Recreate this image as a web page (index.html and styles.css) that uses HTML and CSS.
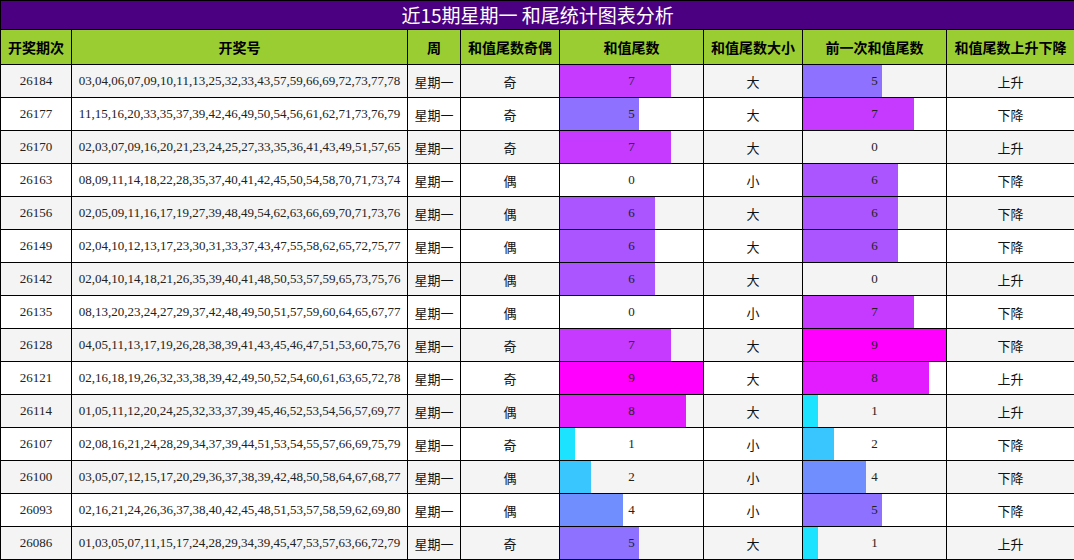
FILE: index.html
```html
<!DOCTYPE html>
<html lang="zh">
<head>
<meta charset="utf-8">
<title>近15期星期一 和尾统计图表分析</title>
<link rel="stylesheet" href="styles.css">
</head>
<body>
<table class="chart">
<colgroup>
<col class="c1"><col class="c2"><col class="c3"><col class="c4"><col class="c5"><col class="c6"><col class="c7"><col class="c8">
</colgroup>
<thead>
<tr class="title-row"><th colspan="8">近15期星期一 和尾统计图表分析</th></tr>
<tr class="head-row">
<th>开奖期次</th><th>开奖号</th><th>周</th><th>和值尾数奇偶</th><th>和值尾数</th><th>和值尾数大小</th><th>前一次和值尾数</th><th>和值尾数上升下降</th>
</tr>
</thead>
<tbody>
<tr><td class="num">26184</td><td class="num">03,04,06,07,09,10,11,13,25,32,33,43,57,59,66,69,72,73,77,78</td><td class="zh">星期一</td><td class="zh">奇</td><td class="bar" style="background-image:linear-gradient(90deg,#c639ff 77.3%,transparent 77.3%)">7</td><td class="zh">大</td><td class="bar" style="background-image:linear-gradient(90deg,#8e71ff 55.2%,transparent 55.2%)">5</td><td class="zh">上升</td></tr>
<tr><td class="num">26177</td><td class="num">11,15,16,20,33,35,37,39,42,46,49,50,54,56,61,62,71,73,76,79</td><td class="zh">星期一</td><td class="zh">奇</td><td class="bar" style="background-image:linear-gradient(90deg,#8e71ff 55.2%,transparent 55.2%)">5</td><td class="zh">大</td><td class="bar" style="background-image:linear-gradient(90deg,#c639ff 77.3%,transparent 77.3%)">7</td><td class="zh">下降</td></tr>
<tr><td class="num">26170</td><td class="num">02,03,07,09,16,20,21,23,24,25,27,33,35,36,41,43,49,51,57,65</td><td class="zh">星期一</td><td class="zh">奇</td><td class="bar" style="background-image:linear-gradient(90deg,#c639ff 77.3%,transparent 77.3%)">7</td><td class="zh">大</td><td class="bar">0</td><td class="zh">上升</td></tr>
<tr><td class="num">26163</td><td class="num">08,09,11,14,18,22,28,35,37,40,41,42,45,50,54,58,70,71,73,74</td><td class="zh">星期一</td><td class="zh">偶</td><td class="bar">0</td><td class="zh">小</td><td class="bar" style="background-image:linear-gradient(90deg,#aa55ff 66.3%,transparent 66.3%)">6</td><td class="zh">下降</td></tr>
<tr><td class="num">26156</td><td class="num">02,05,09,11,16,17,19,27,39,48,49,54,62,63,66,69,70,71,73,76</td><td class="zh">星期一</td><td class="zh">偶</td><td class="bar" style="background-image:linear-gradient(90deg,#aa55ff 66.3%,transparent 66.3%)">6</td><td class="zh">大</td><td class="bar" style="background-image:linear-gradient(90deg,#aa55ff 66.3%,transparent 66.3%)">6</td><td class="zh">下降</td></tr>
<tr><td class="num">26149</td><td class="num">02,04,10,12,13,17,23,30,31,33,37,43,47,55,58,62,65,72,75,77</td><td class="zh">星期一</td><td class="zh">偶</td><td class="bar" style="background-image:linear-gradient(90deg,#aa55ff 66.3%,transparent 66.3%)">6</td><td class="zh">大</td><td class="bar" style="background-image:linear-gradient(90deg,#aa55ff 66.3%,transparent 66.3%)">6</td><td class="zh">下降</td></tr>
<tr><td class="num">26142</td><td class="num">02,04,10,14,18,21,26,35,39,40,41,48,50,53,57,59,65,73,75,76</td><td class="zh">星期一</td><td class="zh">偶</td><td class="bar" style="background-image:linear-gradient(90deg,#aa55ff 66.3%,transparent 66.3%)">6</td><td class="zh">大</td><td class="bar">0</td><td class="zh">上升</td></tr>
<tr><td class="num">26135</td><td class="num">08,13,20,23,24,27,29,37,42,48,49,50,51,57,59,60,64,65,67,77</td><td class="zh">星期一</td><td class="zh">偶</td><td class="bar">0</td><td class="zh">小</td><td class="bar" style="background-image:linear-gradient(90deg,#c639ff 77.3%,transparent 77.3%)">7</td><td class="zh">下降</td></tr>
<tr><td class="num">26128</td><td class="num">04,05,11,13,17,19,26,28,38,39,41,43,45,46,47,51,53,60,75,76</td><td class="zh">星期一</td><td class="zh">奇</td><td class="bar" style="background-image:linear-gradient(90deg,#c639ff 77.3%,transparent 77.3%)">7</td><td class="zh">大</td><td class="bar" style="background-image:linear-gradient(90deg,#ff00ff 100%,transparent 100%)">9</td><td class="zh">下降</td></tr>
<tr><td class="num">26121</td><td class="num">02,16,18,19,26,32,33,38,39,42,49,50,52,54,60,61,63,65,72,78</td><td class="zh">星期一</td><td class="zh">奇</td><td class="bar" style="background-image:linear-gradient(90deg,#ff00ff 100%,transparent 100%)">9</td><td class="zh">大</td><td class="bar" style="background-image:linear-gradient(90deg,#e31cff 88.4%,transparent 88.4%)">8</td><td class="zh">上升</td></tr>
<tr><td class="num">26114</td><td class="num">01,05,11,12,20,24,25,32,33,37,39,45,46,52,53,54,56,57,69,77</td><td class="zh">星期一</td><td class="zh">偶</td><td class="bar" style="background-image:linear-gradient(90deg,#e31cff 88.4%,transparent 88.4%)">8</td><td class="zh">大</td><td class="bar" style="background-image:linear-gradient(90deg,#1ce3ff 10.8%,transparent 10.8%)">1</td><td class="zh">上升</td></tr>
<tr><td class="num">26107</td><td class="num">02,08,16,21,24,28,29,34,37,39,44,51,53,54,55,57,66,69,75,79</td><td class="zh">星期一</td><td class="zh">奇</td><td class="bar" style="background-image:linear-gradient(90deg,#1ce3ff 10.8%,transparent 10.8%)">1</td><td class="zh">小</td><td class="bar" style="background-image:linear-gradient(90deg,#39c6ff 21.9%,transparent 21.9%)">2</td><td class="zh">下降</td></tr>
<tr><td class="num">26100</td><td class="num">03,05,07,12,15,17,20,29,36,37,38,39,42,48,50,58,64,67,68,77</td><td class="zh">星期一</td><td class="zh">偶</td><td class="bar" style="background-image:linear-gradient(90deg,#39c6ff 21.9%,transparent 21.9%)">2</td><td class="zh">小</td><td class="bar" style="background-image:linear-gradient(90deg,#718eff 44.1%,transparent 44.1%)">4</td><td class="zh">下降</td></tr>
<tr><td class="num">26093</td><td class="num">02,16,21,24,26,36,37,38,40,42,45,48,51,53,57,58,59,62,69,80</td><td class="zh">星期一</td><td class="zh">偶</td><td class="bar" style="background-image:linear-gradient(90deg,#718eff 44.1%,transparent 44.1%)">4</td><td class="zh">小</td><td class="bar" style="background-image:linear-gradient(90deg,#8e71ff 55.2%,transparent 55.2%)">5</td><td class="zh">下降</td></tr>
<tr><td class="num">26086</td><td class="num">01,03,05,07,11,15,17,24,28,29,34,39,45,47,53,57,63,66,72,79</td><td class="zh">星期一</td><td class="zh">奇</td><td class="bar" style="background-image:linear-gradient(90deg,#8e71ff 55.2%,transparent 55.2%)">5</td><td class="zh">大</td><td class="bar" style="background-image:linear-gradient(90deg,#1ce3ff 10.8%,transparent 10.8%)">1</td><td class="zh">上升</td></tr>
</tbody>
</table>
</body>
</html>
```
FILE: styles.css
```css
html, body {
  margin: 0;
  padding: 0;
  background: #ffffff;
}
.chart {
  width: 1074px;
  border-collapse: collapse;
  table-layout: fixed;
  font-family: "Liberation Serif", "Noto Sans CJK SC", serif;
  color: #222;
}
.c1 { width: 71px; }
.c2 { width: 336px; }
.c3 { width: 53px; }
.c4 { width: 99px; }
.c5 { width: 144px; }
.c6 { width: 99px; }
.c7 { width: 144px; }
.c8 { width: 128px; }
.chart th, .chart td {
  border: 1px solid #000;
  padding: 0;
  text-align: center;
  white-space: nowrap;
  overflow: hidden;
}
.title-row th {
  background: #4b0082;
  color: #ffffff;
  font-family: "Noto Sans CJK SC", "Noto Sans", sans-serif;
  font-weight: normal;
  font-size: 19px;
  height: 28px;
  line-height: 28px;
}
.head-row th {
  background: #9acd32;
  color: #000;
  font-family: "Noto Sans CJK SC", sans-serif;
  font-weight: bold;
  font-size: 14px;
  height: 34px;
}
.chart tbody td {
  height: 32px;
  font-size: 13px;
  background-color: #ffffff;
  background-repeat: no-repeat;
}
.chart tbody tr:nth-child(odd) td {
  background-color: #f4f4f4;
}
.num {
  font-family: "Liberation Serif", serif;
}
.zh {
  font-family: "Noto Sans CJK SC", sans-serif;
  color: #111;
}
.bar {
  font-family: "Liberation Serif", serif;
}
```
